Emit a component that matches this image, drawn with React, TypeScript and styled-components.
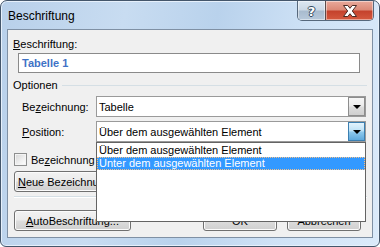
import React from 'react';
import styled, { createGlobalStyle } from 'styled-components';

const GlobalStyle = createGlobalStyle`
  html, body { margin: 0; padding: 0; background: #ffffff; }
  body { font-family: "Liberation Sans", Arial, sans-serif; font-size: 11px; color: #000; }
  * { box-sizing: border-box; }
`;

const Window = styled.div`
  width: 380px;
  height: 247px;
  border: 1px solid #44566b;
  border-radius: 7px 7px 6px 6px;
  background: linear-gradient(100deg, #b8d0ea 0%, #c8dcf1 30%, #b9d2ec 52%, #cfe2f6 75%, #dbeafa 100%);
  box-shadow: inset 0 0 0 1px #e6f0fb;
  display: flex;
  flex-direction: column;
  overflow: hidden;
`;

const TitleBar = styled.div`
  height: 28px;
  display: flex;
  align-items: flex-start;
`;

const TitleText = styled.div`
  padding: 8px 0 0 7px;
  font-size: 12px;
  color: #000;
`;

const CaptionButtons = styled.div`
  margin-left: auto;
  margin-right: 5px;
  display: flex;
  border: 1px solid #56687c;
  border-top: none;
  border-radius: 0 0 5px 5px;
  overflow: hidden;
  height: 20px;
`;

const CaptionButton = styled.div<{ $close?: boolean }>`
  width: ${({ $close }) => ($close ? '48px' : '27px')};
  height: 100%;
  display: flex;
  align-items: center;
  justify-content: center;
  border-left: ${({ $close }) => ($close ? '1px solid #5b4b4b' : 'none')};
  background: ${({ $close }) =>
    $close
      ? 'linear-gradient(180deg, #e9a99b 0%, #dc8a78 45%, #c5432d 55%, #d4593f 100%)'
      : 'linear-gradient(180deg, #dde7f1 0%, #ccd9e6 45%, #a9bccf 55%, #b7c9db 100%)'};
  box-shadow: inset 0 0 0 1px rgba(255, 255, 255, 0.45);
`;

const HelpGlyph = styled.span`
  font-family: "DejaVu Sans", sans-serif;
  font-weight: bold;
  font-size: 13px;
  color: #fff;
  text-shadow: 1px 0 #34495e, -1px 0 #34495e, 0 1px #34495e, 0 -1px #34495e;
  margin-top: 1px;
`;

const Client = styled.div`
  flex: 1;
  margin: 0 6px 8px 6px;
  border: 1px solid #7f90a4;
  background: #f0f0f0;
  padding: 0 5px 0 5px;
  display: flex;
  flex-direction: column;
`;

const Label = styled.div`
  height: 14px;
  line-height: 14px;
  margin-top: 7px;
`;

const TextBox = styled.div`
  margin: 2px 0 0 5px;
  width: 342px;
  height: 20px;
  border: 1px solid #8a8a8a;
  background: #fff;
  padding: 0 0 0 3px;
  line-height: 18px;
  color: #3f72c6;
  font-weight: bold;
  font-size: 11px;
`;

const SectionHeader = styled.div`
  margin-top: 5px;
  height: 14px;
  display: flex;
  align-items: center;
  gap: 4px;
  &::after {
    content: '';
    flex: 1;
    height: 1px;
    background: #d5dfe5;
  }
`;

const FieldRow = styled.div<{ $gap: number }>`
  margin: ${({ $gap }) => $gap}px 0 0 9px;
  height: 21px;
  display: flex;
  align-items: center;
`;

const FieldLabel = styled.div`
  width: 74px;
`;

const Combo = styled.div`
  position: relative;
  width: 270px;
  height: 21px;
  border: 1px solid #9a9a9a;
  background: #fff;
  display: flex;
  align-items: center;
`;

const ComboText = styled.div`
  flex: 1;
  padding-left: 2px;
  white-space: nowrap;
  overflow: hidden;
`;

const DropButton = styled.div<{ $focused?: boolean }>`
  width: 17px;
  height: 19px;
  border: 1px solid ${({ $focused }) => ($focused ? '#3c7fb1' : '#8d8d8d')};
  background: ${({ $focused }) =>
    $focused
      ? 'linear-gradient(180deg, #e3f3fc 0%, #bfe2f6 45%, #8cc8ec 55%, #5fa9dc 100%)'
      : 'linear-gradient(180deg, #f6f6f6 0%, #ececec 45%, #dcdcdc 55%, #cfcfcf 100%)'};
  display: flex;
  align-items: center;
  justify-content: center;
  &::before {
    content: '';
    border-left: 4px solid transparent;
    border-right: 4px solid transparent;
    border-top: 4px solid #000;
    margin-top: 1px;
  }
`;

const DropList = styled.div`
  position: absolute;
  left: -1px;
  top: 20px;
  width: 270px;
  height: 80px;
  border: 1px solid #646464;
  background: #fff;
  padding-top: 1px;
  z-index: 5;
`;

const ListItem = styled.div<{ $selected?: boolean }>`
  height: 13px;
  line-height: 13px;
  padding-left: 2px;
  white-space: nowrap;
  color: ${({ $selected }) => ($selected ? '#fff' : '#000')};
  background: ${({ $selected }) => ($selected ? '#3399ff' : 'transparent')};
  outline: ${({ $selected }) => ($selected ? '1px dotted #f4c08a' : 'none')};
  outline-offset: -1px;
`;

/* the open list covers everything right of x=96, so this row is cut there */
const CheckRow = styled.div`
  margin: 11px 0 0 1px;
  width: 82px;
  height: 13px;
  display: flex;
  align-items: center;
  gap: 4px;
  white-space: nowrap;
  overflow: hidden;
`;

const CheckBox = styled.div`
  flex: none;
  width: 13px;
  height: 13px;
  border: 1px solid #8e8f8f;
  background: linear-gradient(135deg, #d6d6d6 0%, #f0f0f0 60%, #ffffff 100%);
  box-shadow: inset 0 0 0 1px #f4f4f4;
`;

const ButtonRow = styled.div<{ $gap: number }>`
  margin: ${({ $gap }) => $gap}px 0 0 1px;
  height: 21px;
  display: flex;
  gap: 8px;
`;

const Button = styled.div<{ $width: number }>`
  flex: none;
  width: ${({ $width }) => $width}px;
  height: 21px;
  border: 1px solid #707070;
  border-radius: 3px;
  background: linear-gradient(180deg, #f2f2f2 0%, #ebebeb 48%, #dddddd 52%, #cfcfcf 100%);
  box-shadow: inset 0 0 0 1px #fbfbfb;
  display: flex;
  align-items: center;
  justify-content: center;
  white-space: nowrap;
  overflow: hidden;
`;

const Separator = styled.div`
  margin: 4px 0 0 1px;
  height: 2px;
  border-top: 1px solid #d5dfe5;
  border-bottom: 1px solid #ffffff;
`;

const Spacer = styled.div`
  flex: 1;
`;

const BottomRow = styled(ButtonRow)`
  gap: 10px;
  margin-right: 6px;
`;

function CloseIcon() {
  return (
    <svg width="16" height="12" viewBox="0 0 16 12">
      <path
        d="M1.5 0.5 L5.8 0.5 L8 3.3 L10.2 0.5 L14.5 0.5 L10.3 6 L14.5 11.5 L10.2 11.5 L8 8.7 L5.8 11.5 L1.5 11.5 L5.7 6 Z"
        fill="#fff"
        stroke="#4a2a24"
        strokeWidth="1"
        strokeLinejoin="round"
      />
    </svg>
  );
}

export default function App() {
  return (
    <>
      <GlobalStyle />
      <Window>
        <TitleBar>
          <TitleText>Beschriftung</TitleText>
          <CaptionButtons>
            <CaptionButton>
              <HelpGlyph>?</HelpGlyph>
            </CaptionButton>
            <CaptionButton $close>
              <CloseIcon />
            </CaptionButton>
          </CaptionButtons>
        </TitleBar>
        <Client>
          <Label>
            <u>B</u>eschriftung:
          </Label>
          <TextBox>Tabelle 1</TextBox>
          <SectionHeader>Optionen</SectionHeader>
          <FieldRow $gap={4}>
            <FieldLabel>
              Be<u>z</u>eichnung:
            </FieldLabel>
            <Combo>
              <ComboText>Tabelle</ComboText>
              <DropButton />
            </Combo>
          </FieldRow>
          <FieldRow $gap={4}>
            <FieldLabel>
              <u>P</u>osition:
            </FieldLabel>
            <Combo>
              <ComboText>Über dem ausgewählten Element</ComboText>
              <DropButton $focused />
              <DropList>
                <ListItem>Über dem ausgewählten Element</ListItem>
                <ListItem $selected>Unter dem ausgewählten Element</ListItem>
              </DropList>
            </Combo>
          </FieldRow>
          <CheckRow>
            <CheckBox />
            <span>
              Be<u>z</u>eichnung nicht in der Beschriftung verwenden
            </span>
          </CheckRow>
          <ButtonRow $gap={5}>
            <Button $width={110}>
              <u>N</u>eue Bezeichnung...
            </Button>
            <Button $width={110}>Bezeichnung löschen</Button>
            <Button $width={110}>Nummerierung...</Button>
          </ButtonRow>
          <Separator />
          <BottomRow $gap={12}>
            <Button $width={117}>
              <u>A</u>utoBeschriftung...
            </Button>
            <Spacer />
            <Button $width={74}>OK</Button>
            <Button $width={74}>Abbrechen</Button>
          </BottomRow>
        </Client>
      </Window>
    </>
  );
}
